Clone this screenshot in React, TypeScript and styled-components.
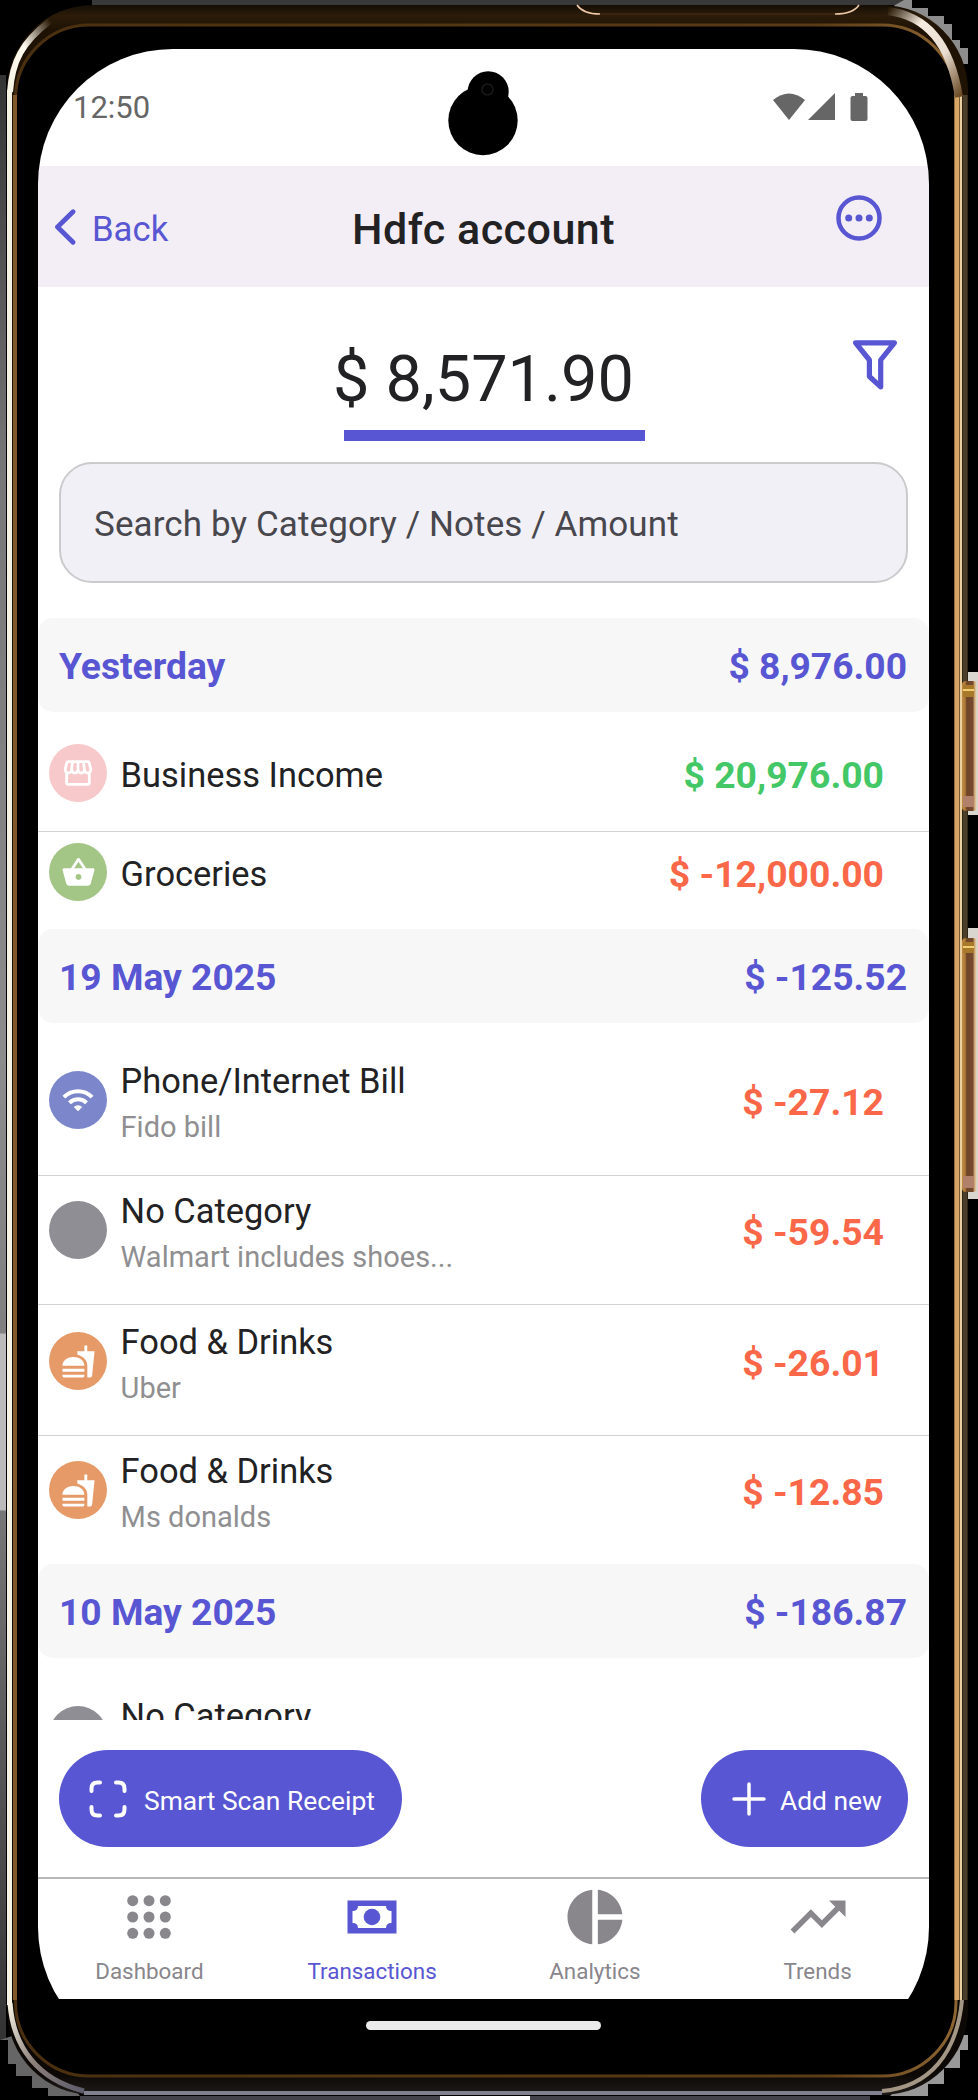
import React from 'react';
import styled, { createGlobalStyle } from 'styled-components';
import { MdOutlineStorefront, MdShoppingBasket, MdWifi, MdFastfood, MdTrendingUp } from 'react-icons/md';

const Global = createGlobalStyle`
  body { margin: 0; background: #000; font-family: Roboto, sans-serif; }
  * { box-sizing: border-box; }
`;

const Stage = styled.div`
  position: relative;
  width: 978px;
  height: 2100px;
  overflow: hidden;
  padding: 49px 49px 0 38px;
`;

const Frame = styled.svg`
  position: absolute;
  left: 0;
  top: 0;
`;

const Screen = styled.div`
  position: relative;
  display: flex;
  flex-direction: column;
  width: 891px;
  height: 2013px;
  border-radius: 135px;
  overflow: hidden;
  background: #000;
  color: #222224;
`;

const StatusBar = styled.div`
  flex: none;
  height: 117px;
  background: #fff;
  padding: 0 61px 0 35px;
  display: flex;
  align-items: center;
  justify-content: space-between;
  color: #666;
  font-size: 31px;
  line-height: 116px;
`;

const StatusIcons = styled.svg`
  display: block;
`;

const Camera = styled.svg`
  position: absolute;
  left: 409px;
  top: 20px;
`;

const Header = styled.header`
  flex: none;
  height: 121px;
  background: #f3edf5;
  display: grid;
  grid-template-columns: 220px 1fr 220px;
  align-items: center;
`;

const Back = styled.div`
  display: flex;
  align-items: center;
  gap: 16px;
  padding: 4px 0 0 16px;
  color: #5856d2;
  font-size: 34.7px;

  svg { margin-top: -3px; }
`;

const Title = styled.h1`
  margin: 4px 0 0;
  text-align: center;
  font-size: 43px;
  font-weight: 500;
  letter-spacing: 0.5px;
`;

const More = styled.div`
  justify-self: end;
  margin: -16px 47px 0 0;
  height: 48px;
`;

const BalanceArea = styled.section`
  flex: none;
  height: 175px;
  background: #fff;
  display: grid;
  grid-template-columns: 220px 1fr 220px;
`;

const Balance = styled.div`
  grid-column: 2;
  display: flex;
  flex-direction: column;
  align-items: center;
  padding-top: 53px;
  font-size: 64.8px;
  line-height: 78px;
`;

const Underline = styled.div`
  width: 301px;
  height: 11px;
  margin: 12px 0 0 22px;
  background: #5856d2;
`;

const FilterButton = styled.div`
  justify-self: end;
  margin: 53px 32px 0 0;
`;

const SearchWrap = styled.div`
  flex: none;
  background: #fff;
  height: 156px;
  padding: 0 21px;
`;

const Search = styled.div`
  height: 121px;
  border: 2px solid #cbcbcd;
  border-radius: 33px;
  background: #f1f0f6;
  padding: 4px 0 0 33px;
  display: flex;
  align-items: center;
  color: #48474d;
  font-size: 35px;
  letter-spacing: 0.1px;
`;

const List = styled.div`
  flex: none;
  height: 1102px;
  overflow: hidden;
  background: #fff;
`;

const DayHeader = styled.div`
  height: 94px;
  border-radius: 15px;
  background: #f7f7f8;
  display: flex;
  align-items: center;
  justify-content: space-between;
  padding: 2px 22px 0 21px;
  color: #5856d2;
  font-size: 37.2px;
  font-weight: 700;
`;

const Row = styled.div<{ $height: number; $top: number; $line?: boolean }>`
  height: ${(p) => p.$height}px;
  padding: ${(p) => p.$top}px 45px 0 11px;
  display: flex;
  align-items: flex-start;
  border-bottom: ${(p) => (p.$line ? '1px solid #d2d2d6' : 'none')};
`;

const Bubble = styled.div<{ $color: string }>`
  flex: none;
  width: 58px;
  height: 58px;
  border-radius: 50%;
  background: ${(p) => p.$color};
  color: #fff;
  display: flex;
  align-items: center;
  justify-content: center;
`;

const Labels = styled.div<{ $single: boolean }>`
  flex: 1;
  margin: ${(p) => (p.$single ? '10px' : '-11px')} 0 0 13.6px;
`;

const Name = styled.div`
  font-size: 34.45px;
  line-height: 42px;
  white-space: nowrap;
`;

const Note = styled.div`
  margin-top: 8px;
  font-size: 29px;
  line-height: 34px;
  color: #8f8f91;
`;

const Amount = styled.div<{ $income?: boolean }>`
  margin-top: 10px;
  font-size: 37.3px;
  line-height: 42px;
  font-weight: 700;
  color: ${(p) => (p.$income ? '#44c767' : '#fb6849')};
`;

const Actions = styled.div`
  flex: none;
  height: 157px;
  padding: 30px 21px 0;
  background: #fff;
  display: flex;
  justify-content: space-between;
  align-items: flex-start;
`;

const Pill = styled.button<{ $width: number; $gap: number; $pad: number }>`
  width: ${(p) => p.$width}px;
  height: 97px;
  border: 0;
  border-radius: 49px;
  background: #5856d2;
  color: #fff;
  display: flex;
  align-items: center;
  gap: ${(p) => p.$gap}px;
  padding: 0 0 0 ${(p) => p.$pad}px;
  font: 400 26.4px Roboto, sans-serif;
  white-space: nowrap;

  span { margin-top: 4px; }
`;

const TabBar = styled.nav`
  flex: none;
  height: 122px;
  background: #fff;
  border-top: 2px solid #b8b8ba;
  display: grid;
  grid-template-columns: repeat(4, 1fr);
`;

const Tab = styled.div<{ $active?: boolean }>`
  display: flex;
  flex-direction: column;
  align-items: center;
  padding-top: 5px;
  color: ${(p) => (p.$active ? '#5856d2' : '#89868c')};
  font-size: 22.4px;
  line-height: 28px;

  svg { display: block; margin-bottom: 7px; }
`;

const HomeArea = styled.div`
  flex: 1;
  background: #000;
  display: flex;
  justify-content: center;
  padding-top: 22px;
`;

const HomeBar = styled.div`
  width: 235px;
  height: 9px;
  border-radius: 5px;
  background: #ebebeb;
`;

interface Entry {
  name: string;
  note?: string;
  amount: string;
  color: string;
  icon?: React.ReactNode;
  income?: boolean;
  height: number;
  top: number;
  line?: boolean;
}

const food = <MdFastfood size={35} />;

const days: { date: string; total: string; entries: Entry[] }[] = [
  {
    date: 'Yesterday',
    total: '$ 8,976.00',
    entries: [
      { name: 'Business Income', amount: '$ 20,976.00', color: '#f7c9ca', icon: <MdOutlineStorefront size={34} />, income: true, height: 120, top: 32, line: true },
      { name: 'Groceries', amount: '$ -12,000.00', color: '#a3c585', icon: <MdShoppingBasket size={35} />, height: 97, top: 11 },
    ],
  },
  {
    date: '19 May 2025',
    total: '$ -125.52',
    entries: [
      { name: 'Phone/Internet Bill', note: 'Fido bill', amount: '$ -27.12', color: '#7b86cb', icon: <MdWifi size={34} />, height: 153, top: 48, line: true },
      { name: 'No Category', note: 'Walmart includes shoes...', amount: '$ -59.54', color: '#8f8e94', height: 129, top: 25, line: true },
      { name: 'Food & Drinks', note: 'Uber', amount: '$ -26.01', color: '#e59a68', icon: food, height: 131, top: 27, line: true },
      { name: 'Food & Drinks', note: 'Ms donalds', amount: '$ -12.85', color: '#e59a68', icon: food, height: 128, top: 25 },
    ],
  },
  {
    date: '10 May 2025',
    total: '$ -186.87',
    entries: [{ name: 'No Category', note: '', amount: '', color: '#8f8e94', height: 150, top: 48 }],
  },
];

function PhoneFrame() {
  return (
    <Frame width="978" height="2100" viewBox="0 0 978 2100">
      <defs>
        <linearGradient id="side" x1="0" y1="0" x2="0" y2="1">
          <stop offset="0" stopColor="#333" />
          <stop offset="0.1" stopColor="#555" />
          <stop offset="0.2" stopColor="#777" />
          <stop offset="0.5" stopColor="#8c8c8c" />
          <stop offset="0.64" stopColor="#808080" />
          <stop offset="0.641" stopColor="#bbb" />
          <stop offset="0.73" stopColor="#bbb" />
          <stop offset="0.731" stopColor="#777" />
          <stop offset="1" stopColor="#333" />
        </linearGradient>
        <linearGradient id="rim" x1="0" y1="0" x2="0" y2="1">
          <stop offset="0" stopColor="#150e05" />
          <stop offset="0.005" stopColor="#2c1c09" />
          <stop offset="0.012" stopColor="#1e1204" />
          <stop offset="0.5" stopColor="#1a1006" />
          <stop offset="0.99" stopColor="#0c0805" />
          <stop offset="1" stopColor="#1f1b18" />
        </linearGradient>
        <linearGradient id="line" x1="0" y1="0" x2="1" y2="0">
          <stop offset="0" stopColor="#4a3010" />
          <stop offset="0.85" stopColor="#5a3b14" />
          <stop offset="1" stopColor="#8d6532" />
        </linearGradient>
        <linearGradient id="key" x1="0" y1="0" x2="1" y2="0">
          <stop offset="0" stopColor="#c08d42" />
          <stop offset="0.2" stopColor="#b07a3a" />
          <stop offset="0.32" stopColor="#6e4526" />
          <stop offset="0.72" stopColor="#764a31" />
          <stop offset="0.85" stopColor="#d9b27b" />
          <stop offset="1" stopColor="#ded9cf" />
        </linearGradient>
        <linearGradient id="glintTop" x1="0" y1="1" x2="1" y2="0">
          <stop offset="0" stopColor="#f7f3e4" />
          <stop offset="0.5" stopColor="#fffbf0" />
          <stop offset="1" stopColor="#2c1c09" />
        </linearGradient>
        <linearGradient id="glintRight" x1="0" y1="0" x2="1" y2="1">
          <stop offset="0" stopColor="#2c1c09" />
          <stop offset="0.3" stopColor="#f5ebdf" />
          <stop offset="0.65" stopColor="#e8ddd0" />
          <stop offset="1" stopColor="#6b4a25" />
        </linearGradient>
        <linearGradient id="glintLow" x1="0" y1="0" x2="1" y2="1">
          <stop offset="0" stopColor="#f7f3e4" />
          <stop offset="0.5" stopColor="#8c807a" />
          <stop offset="1" stopColor="#5d5c6b" />
        </linearGradient>
      </defs>
      <rect width="978" height="2100" fill="#000" />
      <rect x="0" y="75" width="6" height="1965" fill="url(#side)" />
      <rect x="92" y="0" width="812" height="5" fill="#393939" />
      <rect x="80" y="2096" width="790" height="4" fill="#44424a" />
      <rect x="440" y="2096" width="90" height="4" fill="#fff" />
      <path d="M904 0H912V8H928V16H944V24H952V40H960V48H968V64H950L890 8Z" fill="#8d8d8d" />
      <path d="M0 2040H8V2064H16V2076H32V2088H48V2096H80L30 2030Z" fill="#666" />
      <path d="M968 2035V2050H960V2068H944V2084H928V2096H890L950 2035Z" fill="#999" />
      <rect x="7" y="5" width="961" height="2090" rx="86" fill="url(#rim)" />
      <rect x="15.500" y="25" width="940.500" height="2051" rx="74" fill="#000" stroke="url(#line)" strokeWidth="3" />
      <path d="M9.500 90V2005" stroke="#f7f3e4" strokeWidth="5" />
      <path d="M15 95V2000" stroke="#80582a" strokeWidth="4" />
      <path d="M957 95V2000" stroke="#d7a667" strokeWidth="5" />
      <path d="M961 95V2000" stroke="#ead0a0" strokeWidth="2" />
      <path d="M965 95V2000" stroke="#4a3d29" strokeWidth="5" />
      <path d="M10 92C12 62 22 42 50 21" fill="none" stroke="url(#glintTop)" strokeWidth="6" />
      <path d="M888 11C926 16 950 42 959 97" fill="none" stroke="url(#glintRight)" strokeWidth="8" />
      <path d="M10 2003C13 2047 38 2080 84 2091" fill="none" stroke="url(#glintLow)" strokeWidth="5" />
      <path d="M882 2091C930 2087 957 2053 962 2000" fill="none" stroke="#a39684" strokeWidth="4" />
      <path d="M84 2093H882" stroke="#81808f" strokeWidth="4" />
      <path d="M577 5Q583 14 600 14" fill="none" stroke="#f0c9a8" strokeWidth="1.500" />
      <path d="M600 14H835" fill="none" stroke="#4a3116" strokeWidth="1" />
      <path d="M835 14Q853 14 859 5" fill="none" stroke="#f0c9a8" strokeWidth="1.500" />
      <path d="M968 672H978V815H968ZM968 928H978V1199H968Z" fill="#d9d6d0" />
      <rect x="962" y="681" width="15" height="130" rx="4" fill="url(#key)" />
      <rect x="962" y="938" width="15" height="254" rx="4" fill="url(#key)" />
      <path d="M963 685H974V697H963ZM963 942H974V953H963Z" fill="#a8792a" />
      <path d="M963 690H974M963 947H974" stroke="#f0cf72" strokeWidth="2" />
      <path d="M963 796H974V807H963ZM963 1176H974V1188H963Z" fill="#b0806a" />
    </Frame>
  );
}

function CategoryRow({ entry }: { entry: Entry }) {
  return (
    <Row $height={entry.height} $top={entry.top} $line={entry.line}>
      <Bubble $color={entry.color}>{entry.icon}</Bubble>
      <Labels $single={entry.note === undefined}>
        <Name>{entry.name}</Name>
        {entry.note && <Note>{entry.note}</Note>}
      </Labels>
      <Amount $income={entry.income}>{entry.amount}</Amount>
    </Row>
  );
}

export default function App() {
  return (
    <Stage>
      <Global />
      <PhoneFrame />
      <Screen>
        <StatusBar>
          <span>12:50</span>
          <StatusIcons width="95" height="29" viewBox="0 0 95 29" fill="#666">
            <path d="M0 7Q16-6 32 7L16 27Z" />
            <path d="M35 27L62 0V27Z" />
            <path d="M82 0h8v3h2.500q2 0 2 2v21q0 2-2 2h-13q-2 0-2-2V5q0-2 2-2H82z" />
          </StatusIcons>
          <Camera width="72" height="88" viewBox="0 0 72 88">
            <circle cx="36" cy="51.500" r="34.700" />
            <circle cx="41.200" cy="22.700" r="20.500" />
            <circle cx="40.500" cy="20.500" r="5.500" fill="none" stroke="#1b1a18" strokeWidth="1.500" />
          </Camera>
        </StatusBar>
        <Header>
          <Back>
            <svg width="22" height="36" viewBox="0 0 22 36" fill="none" stroke="#5856d2" strokeWidth="4.800" strokeLinecap="round" strokeLinejoin="round">
              <path d="M19 2.700L3.500 18L19 33.300" />
            </svg>
            Back
          </Back>
          <Title>Hdfc account</Title>
          <More>
            <svg width="46" height="46" viewBox="0 0 46 46" fill="#5856d2">
              <circle cx="23" cy="23" r="20.500" fill="none" stroke="#5856d2" strokeWidth="4.500" />
              <circle cx="12.700" cy="23" r="3.500" />
              <circle cx="23" cy="23" r="3.500" />
              <circle cx="33.300" cy="23" r="3.500" />
            </svg>
          </More>
        </Header>
        <BalanceArea>
          <Balance>
            $ 8,571.90
            <Underline />
          </Balance>
          <FilterButton>
            <svg width="44" height="50" viewBox="0 0 44 50" fill="none" stroke="#5856d2" strokeWidth="5.200" strokeLinejoin="round">
              <path d="M2.600 2.800H41.400L27.700 20V46.800L16.400 36.500V20Z" />
            </svg>
          </FilterButton>
        </BalanceArea>
        <SearchWrap>
          <Search>Search by Category / Notes / Amount</Search>
        </SearchWrap>
        <List>
          {days.map((day) => (
            <React.Fragment key={day.date}>
              <DayHeader>
                <span>{day.date}</span>
                <span>{day.total}</span>
              </DayHeader>
              {day.entries.map((entry, i) => (
                <CategoryRow key={i} entry={entry} />
              ))}
            </React.Fragment>
          ))}
        </List>
        <Actions>
          <Pill $width={343} $gap={17} $pad={30}>
            <svg width="38" height="38" viewBox="0 0 38 38" fill="none" stroke="#fff" strokeWidth="4" strokeLinecap="round">
              <path d="M2.500 11V8.500Q2.500 2.500 8.500 2.500H11M27 2.500H29.500Q35.500 2.500 35.500 8.500V11M35.500 27V29.500Q35.500 35.500 29.500 35.500H27M11 35.500H8.500Q2.500 35.500 2.500 29.500V27" />
            </svg>
            <span>Smart Scan Receipt</span>
          </Pill>
          <Pill $width={207} $gap={14} $pad={31}>
            <svg width="34" height="34" viewBox="0 0 34 34" stroke="#fff" strokeWidth="3.500" strokeLinecap="round">
              <path d="M17 2V32M2 17H32" />
            </svg>
            <span>Add new</span>
          </Pill>
        </Actions>
        <TabBar>
          <Tab>
            <svg width="66" height="66" viewBox="0 0 66 66" fill="#89868c">
              {[16.700, 33, 49.300].map((y) => [16.700, 33, 49.300].map((x) => <circle key={`${x}-${y}`} cx={x} cy={y} r="5.500" />))}
            </svg>
            Dashboard
          </Tab>
          <Tab $active>
            <svg width="66" height="66" viewBox="0 0 66 66" fill="#5856d2">
              <rect x="8.500" y="16.500" width="49" height="33" />
              <path d="M19 22H47Q47 27 52.500 27V39Q47 39 47 44H19Q19 39 13.500 39V27Q19 27 19 22Z" fill="#fff" />
              <circle cx="33" cy="33" r="8.300" />
            </svg>
            Transactions
          </Tab>
          <Tab>
            <svg width="66" height="66" viewBox="0 0 24 24" fill="currentColor">
              <path d="M11 2.050v19.900C5.950 21.450 2 17.200 2 12S5.950 2.550 11 2.050zM13.030 2.050V11H21.950C21.480 6.270 17.730 2.510 13.030 2.050zM13.030 13v8.950C17.750 21.480 21.480 17.730 21.950 13z" />
            </svg>
            Analytics
          </Tab>
          <Tab>
            <MdTrendingUp size={66} />
            Trends
          </Tab>
        </TabBar>
        <HomeArea>
          <HomeBar />
        </HomeArea>
      </Screen>
    </Stage>
  );
}
